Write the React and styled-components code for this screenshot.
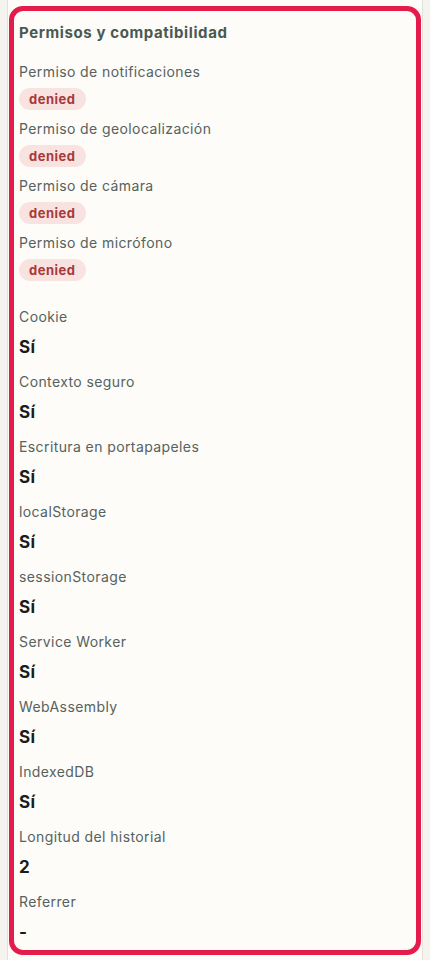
import React from "react";
import styled, { createGlobalStyle } from "styled-components";

const Global = createGlobalStyle`
  html, body { margin: 0; padding: 0; background: #f4f3ee; }
  body { font-family: Inter, "Noto Sans", "Liberation Sans", sans-serif; -webkit-font-smoothing: antialiased; }
  * { box-sizing: border-box; }
`;

const Panel = styled.div`
  margin: 0 7px 0 7px;
  min-height: 960px;
  background: #fdfcf8;
  border-left: 1px solid #e3e1da;
  border-right: 1px solid #e3e1da;
  padding: 6px 1px;
`;

const Card = styled.section`
  border: 5px solid #e31c4b;
  border-radius: 14px;
  background: #fdfcf8;
  padding: 11px 5px 6px 5px;
  display: flex;
  flex-direction: column;
`;

const Title = styled.h2`
  margin: 0 0 18px 0;
  font-size: 15px;
  line-height: 22px;
  font-weight: 700;
  letter-spacing: 0.6px;
  color: #4a5853;
`;

const List = styled.div`
  display: flex;
  flex-direction: column;
  gap: ${(p) => p.$gap}px;
  margin-bottom: ${(p) => p.$after || 0}px;
`;

const Item = styled.div`
  display: flex;
  flex-direction: column;
  align-items: flex-start;
  gap: ${(p) => p.$gap}px;
`;

const Label = styled.div`
  font-size: 14px;
  line-height: 20px;
  letter-spacing: 0.4px;
  color: #56625e;
`;

const Badge = styled.span`
  display: inline-flex;
  align-items: center;
  height: 22px;
  padding: 0 10px;
  border-radius: 11px;
  background: #f9e3e0;
  color: #a8393b;
  font-size: 13px;
  font-weight: 700;
  letter-spacing: 0.5px;
`;

const Value = styled.div`
  font-size: 17px;
  line-height: 24px;
  font-weight: 700;
  letter-spacing: 0.3px;
  color: #1b1b1b;
`;

const perms = [
  "Permiso de notificaciones",
  "Permiso de geolocalización",
  "Permiso de cámara",
  "Permiso de micrófono",
];

const compat = [
  ["Cookie", "Sí"],
  ["Contexto seguro", "Sí"],
  ["Escritura en portapapeles", "Sí"],
  ["localStorage", "Sí"],
  ["sessionStorage", "Sí"],
  ["Service Worker", "Sí"],
  ["WebAssembly", "Sí"],
  ["IndexedDB", "Sí"],
  ["Longitud del historial", "2"],
  ["Referrer", "-"],
];

export default function App() {
  return (
    <>
      <Global />
      <Panel>
        <Card>
          <Title>Permisos y compatibilidad</Title>
          <List $gap={9} $after={26}>
            {perms.map((p) => (
              <Item key={p} $gap={6}>
                <Label>{p}</Label>
                <Badge>denied</Badge>
              </Item>
            ))}
          </List>
          <List $gap={13}>
            {compat.map(([k, v]) => (
              <Item key={k} $gap={8}>
                <Label>{k}</Label>
                <Value>{v}</Value>
              </Item>
            ))}
          </List>
        </Card>
      </Panel>
    </>
  );
}
